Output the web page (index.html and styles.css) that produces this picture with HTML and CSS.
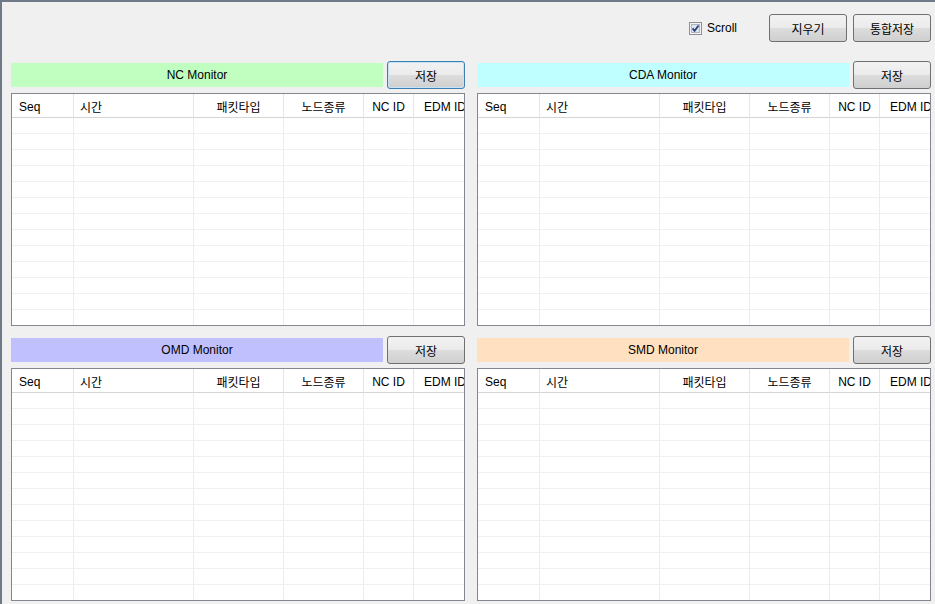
FILE: index.html
```html
<!DOCTYPE html>
<html lang="ko">
<head>
    <meta charset="UTF-8">
    <title>Packet Monitor</title>
    <link rel="stylesheet" href="styles.css">
</head>
<body>

<div class="window">
    <div class="toolbar">
        <label class="check">
            <svg class="check-box" width="13" height="13" viewBox="0 0 13 13">
                <rect x="0.5" y="0.5" width="12" height="12" fill="#f4f4f4" stroke="#8f8f8f"/>
                <rect x="2.5" y="2.5" width="8" height="8" fill="#dde4ef" stroke="#aeb6c3"/>
                <path d="M3.6 6.4 L5.6 8.8 L9.6 3.4" fill="none" stroke="#263d78" stroke-width="1.7"/>
            </svg>
            Scroll
        </label>
        <button class="btn">지우기</button>
        <button class="btn">통합저장</button>
    </div>

    <div class="monitors">
        <section class="panel">
            <div class="panel-head">
                <div class="title nc">NC Monitor</div>
                <button class="btn focus">저장</button>
            </div>
            <div class="list"><table class="grid"></table></div>
        </section>

        <section class="panel">
            <div class="panel-head">
                <div class="title cda">CDA Monitor</div>
                <button class="btn">저장</button>
            </div>
            <div class="list"><table class="grid"></table></div>
        </section>

        <section class="panel">
            <div class="panel-head">
                <div class="title omd">OMD Monitor</div>
                <button class="btn">저장</button>
            </div>
            <div class="list"><table class="grid"></table></div>
        </section>

        <section class="panel">
            <div class="panel-head">
                <div class="title smd">SMD Monitor</div>
                <button class="btn">저장</button>
            </div>
            <div class="list"><table class="grid"></table></div>
        </section>
    </div>
</div>

<script>
    // Same columns in every monitor list
    const columns = ["Seq", "시간", "패킷타입", "노드종류", "NC ID", "EDM ID"];
    const colClass = ["c-seq", "c-time", "c-type", "c-node", "c-nc", "c-edm"];
    const emptyRows = 13;

    document.querySelectorAll(".grid").forEach(table => {
        let html = "<colgroup>";
        colClass.forEach(c => html += `<col class="${c}">`);
        html += "</colgroup><thead><tr>";
        columns.forEach((name, i) => html += `<th class="${colClass[i]}">${name}</th>`);
        html += "</tr></thead><tbody>";
        for (let r = 0; r < emptyRows; r++) {
            html += "<tr>" + columns.map(() => "<td></td>").join("") + "</tr>";
        }
        html += "</tbody>";
        table.innerHTML = html;
    });
</script>

</body>
</html>
```

FILE: styles.css
```css
body {
    margin: 0;
    background-color: #f0f0f0;
    font-family: "Liberation Sans", "Noto Sans CJK KR", sans-serif;
    font-size: 12px;
    color: #000;
}
.window {
    height: 604px;
    box-sizing: border-box;
    border-top: 2px solid #6f7a88;
    border-left: 2px solid #6f7a88;
    padding: 12px 4px 0 9px;
}
.toolbar {
    display: flex;
    justify-content: flex-end;
    align-items: center;
    gap: 6px;
    height: 28px;
}
.check {
    display: flex;
    align-items: center;
    gap: 5px;
    margin-right: 26px;
    font-size: 12px;
}
.btn {
    width: 78px;
    height: 28px;
    padding: 0;
    border: 1px solid #707070;
    border-radius: 3px;
    background: linear-gradient(#f2f2f2 0%, #ebebeb 50%, #dddddd 50%, #cfcfcf 100%);
    font-family: inherit;
    font-size: 12px;
    color: #000;
}
.btn.focus {
    border-color: #3c7fb1;
    box-shadow: inset 0 0 0 1px #c4e3f7;
}
.monitors {
    display: grid;
    grid-template-columns: 454px 454px;
    column-gap: 12px;
    row-gap: 10px;
    margin-top: 19px;
}
.panel {
    display: flex;
    flex-direction: column;
    height: 265px;
}
.panel-head {
    display: flex;
    align-items: center;
    gap: 4px;
    height: 28px;
}
.title {
    flex: 1;
    height: 24px;
    line-height: 24px;
    text-align: center;
}
.nc { background-color: #c0ffc0; }
.cda { background-color: #c0ffff; }
.omd { background-color: #c0c0ff; }
.smd { background-color: #ffe0c0; }

.list {
    flex: 1;
    margin-top: 4px;
    border: 1px solid #828790;
    background-color: #fff;
    overflow: hidden;
}
.grid {
    table-layout: fixed;
    border-collapse: separate;
    border-spacing: 0;
    width: 482px;
}
.c-seq { width: 62px; }
.c-time { width: 120px; }
.c-type { width: 90px; }
.c-node { width: 80px; }
.c-nc { width: 50px; }
.c-edm { width: 80px; }

.grid th {
    height: 24px;
    padding: 2px 6px 0;
    font-weight: normal;
    text-align: center;
    white-space: nowrap;
    overflow: hidden;
    border-right: 1px solid #e5e5e5;
    border-bottom: 1px solid #d5d5d5;
    box-sizing: border-box;
}
.grid th.c-seq { text-align: left; padding-left: 7px; }
.grid th.c-time { text-align: left; }
.grid th.c-edm { text-align: left; padding-left: 10px; }
.grid td {
    height: 16px;
    padding: 0;
    border-right: 1px solid #ececec;
    border-bottom: 1px solid #f0f0f0;
    box-sizing: border-box;
}
```
